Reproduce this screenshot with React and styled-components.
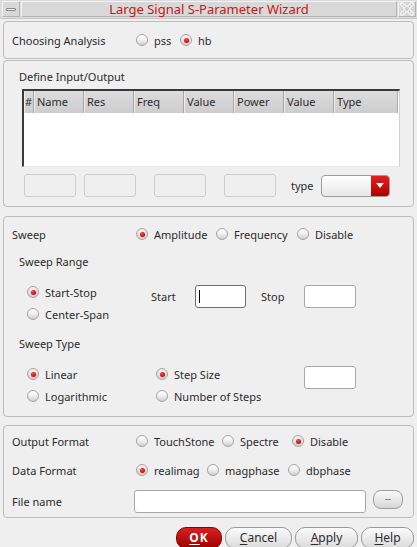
import React from "react";
import styled, { createGlobalStyle, css } from "styled-components";

const Global = createGlobalStyle`
  html, body { margin: 0; padding: 0; background: #efefef; }
  body { font-family: "Noto Sans", "DejaVu Sans", sans-serif; font-size: 11px; color: #2b2b2b; }
  * { box-sizing: border-box; }
`;

const Window = styled.div`
  width: 417px;
  height: 547px;
  overflow: hidden;
  background: #efefef;
  display: flex;
  flex-direction: column;
`;

const TitleBar = styled.div`
  height: 19px;
  flex: none;
  display: flex;
  gap: 1px;
  padding: 1px 1px 1px 2px;
  background: #dcdcdc;
  border-bottom: 1px solid #c8c8c8;
`;

const TitleButton = styled.div`
  width: 18px;
  flex: none;
  display: flex;
  align-items: center;
  justify-content: center;
  border: 1px solid;
  border-color: #f4f4f4 #b4b4b4 #b4b4b4 #f4f4f4;
  background: #d8d8d8;
`;

const Title = styled.div`
  flex: 1;
  display: flex;
  align-items: center;
  justify-content: center;
  border: 1px solid;
  border-color: #f4f4f4 #b4b4b4 #b4b4b4 #f4f4f4;
  background: #d8d8d8;
  color: #cc1414;
  font-size: 13px;
  line-height: 15px;
`;

const MinBar = styled.div`
  width: 10px;
  height: 3px;
  border: 1px solid #8a8a8a;
  background: #f0f0f0;
  border-radius: 1px;
`;

const Panel = styled.div`
  margin: ${(p) => p.$top || 0}px 3px 0 3px;
  height: ${(p) => p.$h}px;
  flex: none;
  border: 1px solid #bdbdbd;
  border-radius: 4px;
  padding: ${(p) => p.$pad || "0 0 0 8px"};
  display: flex;
  flex-direction: column;
  justify-content: ${(p) => (p.$center ? "center" : "flex-start")};
`;

const Row = styled.div`
  display: flex;
  align-items: center;
  height: ${(p) => p.$h || 22}px;
  margin-top: ${(p) => p.$mt || 0}px;
  margin-left: ${(p) => p.$ml || 0}px;
  flex: none;
`;

const Label = styled.div`
  width: ${(p) => p.$w || 124}px;
  flex: none;
  white-space: nowrap;
`;

const SubTitle = styled.div`
  height: 16px;
  line-height: 16px;
  margin-top: ${(p) => p.$mt || 0}px;
  margin-left: ${(p) => p.$ml ?? 7}px;
  white-space: nowrap;
`;

const RadioItem = styled.label`
  display: flex;
  align-items: center;
  gap: 6px;
  width: ${(p) => (p.$w ? `${p.$w}px` : "auto")};
  flex: none;
  white-space: nowrap;
`;

const RadioDot = styled.span`
  width: 12px;
  height: 12px;
  flex: none;
  border-radius: 50%;
  border: 1px solid #a4a4a4;
  background: linear-gradient(#ffffff 0%, #f2f2f2 45%, #cfcfcf 100%);
  display: flex;
  align-items: center;
  justify-content: center;
  ${(p) =>
    p.$on &&
    css`
      background: linear-gradient(#f4f4f4 0%, #e2e2e2 50%, #d0d0d0 100%);
      &::after {
        content: "";
        width: 5px;
        height: 5px;
        border-radius: 50%;
        background: radial-gradient(circle at 40% 35%, #ff4a4a, #d00000 70%);
      }
    `}
`;

const Radio = ({ on, children, w }) => (
  <RadioItem $w={w}>
    <RadioDot $on={on} />
    <span>{children}</span>
  </RadioItem>
);

const TextBox = styled.div`
  width: ${(p) => p.$w}px;
  height: ${(p) => p.$h || 23}px;
  flex: none;
  margin-left: ${(p) => p.$ml || 0}px;
  margin-top: ${(p) => p.$mt || 0}px;
  background: ${(p) => (p.$disabled ? "#efefef" : "#ffffff")};
  border: 1px solid ${(p) => (p.$disabled ? "#cdcdcd" : "#a8a8a8")};
  border-radius: 3px;
  display: flex;
  align-items: center;
  padding-left: 3px;
  ${(p) =>
    p.$focus &&
    css`
      border-color: #6e6e6e;
      &::before {
        content: "";
        width: 1px;
        height: 13px;
        background: #000;
      }
    `}
`;

const Table = styled.div`
  margin: 4px 0 0 3px;
  width: 378px;
  height: 78px;
  flex: none;
  background: #ffffff;
  border-top: 2px solid #3a3a3a;
  border-left: 2px solid #3a3a3a;
  border-right: 1px solid #d0d0d0;
  border-bottom: 1px solid #e8e8e8;
  display: flex;
  flex-direction: column;
`;

const HeaderRow = styled.div`
  height: 22px;
  display: flex;
  background: linear-gradient(#dcdcdc, #cdcdcd);
  margin-right: 1px;
  border-right: 1px solid #a8a8a8;
`;

const HeaderCell = styled.div`
  width: ${(p) => p.$w}px;
  flex: none;
  padding-left: ${(p) => (p.$w < 20 ? 1 : 3)}px;
  line-height: 22px;
  color: #2b2b2b;
  border-right: 1px solid #a6a6a6;
  box-shadow: inset 1px 0 0 #ececec;
  white-space: nowrap;
  overflow: hidden;
  &:last-child { border-right: none; flex: 1; }
`;

const TypeLabel = styled.div`
  margin-left: 15px;
  width: 30px;
  flex: none;
`;

const Select = styled.div`
  width: 69px;
  height: 22px;
  flex: none;
  display: flex;
  border: 1px solid #9c9c9c;
  border-radius: 4px;
  overflow: hidden;
  background: linear-gradient(#ffffff, #e6e6e6);
`;

const SelectField = styled.div`
  flex: 1;
`;

const SelectArrow = styled.div`
  width: 18px;
  flex: none;
  background: linear-gradient(#e02020, #b00000);
  display: flex;
  align-items: center;
  justify-content: center;
  &::after {
    content: "";
    border-left: 4px solid transparent;
    border-right: 4px solid transparent;
    border-top: 5px solid #ffffff;
  }
`;

const Columns = styled.div`
  display: flex;
  margin-top: ${(p) => p.$mt || 0}px;
  margin-left: 15px;
  flex: none;
`;

const Col = styled.div`
  width: ${(p) => p.$w}px;
  flex: none;
  display: flex;
  flex-direction: column;
`;

const FieldLabel = styled.div`
  width: ${(p) => p.$w}px;
  margin-left: ${(p) => p.$ml || 0}px;
  flex: none;
`;

const SmallButton = styled.div`
  width: 30px;
  height: 19px;
  margin-left: 7px;
  margin-top: -3px;
  flex: none;
  border: 1px solid #9c9c9c;
  border-radius: 8px;
  background: linear-gradient(#fafafa, #d6d6d6);
  display: flex;
  align-items: center;
  justify-content: center;
  font-size: 9px;
  color: #444;
  line-height: 1;
  padding-bottom: 2px;
`;

const ButtonBar = styled.div`
  display: flex;
  justify-content: flex-end;
  gap: 3px;
  margin-top: 9px;
  padding-right: 3px;
  flex: none;
`;

const Button = styled.div`
  width: ${(p) => p.$w}px;
  height: 22px;
  flex: none;
  border-radius: 10px;
  border: 1px solid #9a9a9a;
  background: linear-gradient(#fbfbfb, #dadada);
  display: flex;
  align-items: center;
  justify-content: center;
  font-size: 12px;
  color: #2b2b2b;
  padding-bottom: 1px;
  u { text-decoration: underline; text-underline-offset: 2px; }
  ${(p) =>
    p.$primary &&
    css`
      border-color: #8a0000;
      background: linear-gradient(#d82020, #a00000);
      color: #ffffff;
      font-weight: bold;
      letter-spacing: 1px;
    `}
`;

const CloseIcon = () => (
  <svg width="14" height="14" viewBox="0 0 14 14">
    <path
      d="M2 2 L12 12 M12 2 L2 12"
      stroke="#f2f2f2"
      strokeWidth="4"
      strokeLinecap="round"
    />
    <path
      d="M2 2 L12 12 M12 2 L2 12"
      stroke="#c4c4c4"
      strokeWidth="1.5"
      strokeDasharray="1.5 1"
      fill="none"
    />
  </svg>
);

export default function App() {
  const headers = [
    ["#", 10],
    ["Name", 50],
    ["Res", 50],
    ["Freq", 50],
    ["Value", 50],
    ["Power", 50],
    ["Value", 50],
    ["Type", 60],
  ];
  return (
    <>
      <Global />
      <Window>
        <TitleBar>
          <TitleButton>
            <MinBar />
          </TitleButton>
          <Title>Large Signal S-Parameter Wizard</Title>
          <TitleButton>
            <CloseIcon />
          </TitleButton>
        </TitleBar>

        <Panel $top={2} $h={38} $center>
          <Row>
            <Label>Choosing Analysis</Label>
            <Radio w={44}>pss</Radio>
            <Radio on>hb</Radio>
          </Row>
        </Panel>

        <Panel $top={1} $h={147} $pad="8px 0 0 15px">
          <SubTitle $ml={0}>Define Input/Output</SubTitle>
          <Table>
            <HeaderRow>
              {headers.map(([t, w], i) => (
                <HeaderCell key={i} $w={w}>
                  {t}
                </HeaderCell>
              ))}
            </HeaderRow>
          </Table>
          <Row $h={23} $mt={7} $ml={5}>
            <TextBox $w={52} $disabled />
            <TextBox $w={52} $ml={8} $disabled />
            <TextBox $w={52} $ml={18} $disabled />
            <TextBox $w={52} $ml={18} $disabled />
            <TypeLabel>type</TypeLabel>
            <Select>
              <SelectField />
              <SelectArrow />
            </Select>
          </Row>
        </Panel>

        <Panel $top={9} $h={201} $pad="6px 0 0 8px">
          <Row>
            <Label>Sweep</Label>
            <Radio on w={80}>Amplitude</Radio>
            <Radio w={81}>Frequency</Radio>
            <Radio>Disable</Radio>
          </Row>
          <SubTitle $mt={9}>Sweep Range</SubTitle>
          <Columns $mt={11}>
            <Col $w={124}>
              <Row>
                <Radio on>Start-Stop</Radio>
              </Row>
              <Row>
                <Radio>Center-Span</Radio>
              </Row>
            </Col>
            <Row $h={23} $mt={4}>
              <FieldLabel $w={44}>Start</FieldLabel>
              <TextBox $w={51} $focus />
              <FieldLabel $w={43} $ml={15}>
                Stop
              </FieldLabel>
              <TextBox $w={52} />
            </Row>
          </Columns>
          <SubTitle $mt={11}>Sweep Type</SubTitle>
          <Columns $mt={11}>
            <Col $w={129}>
              <Row>
                <Radio on>Linear</Radio>
              </Row>
              <Row>
                <Radio>Logarithmic</Radio>
              </Row>
            </Col>
            <Col $w={148}>
              <Row>
                <Radio on>Step Size</Radio>
              </Row>
              <Row>
                <Radio>Number of Steps</Radio>
              </Row>
            </Col>
            <TextBox $w={52} $mt={3} />
          </Columns>
        </Panel>

        <Panel $top={8} $h={93} $pad="4px 0 0 8px">
          <Row>
            <Label>Output Format</Label>
            <Radio w={86}>TouchStone</Radio>
            <Radio w={70}>Spectre</Radio>
            <Radio on>Disable</Radio>
          </Row>
          <Row $mt={7}>
            <Label>Data Format</Label>
            <Radio on w={71}>realimag</Radio>
            <Radio w={81}>magphase</Radio>
            <Radio>dbphase</Radio>
          </Row>
          <Row $mt={9}>
            <Label $w={122}>File name</Label>
            <TextBox $w={232} />
            <SmallButton>--</SmallButton>
          </Row>
        </Panel>

        <ButtonBar>
          <Button $w={46} $primary>
            <span>
              <u>O</u>K
            </span>
          </Button>
          <Button $w={67}>
            <span>
              <u>C</u>ancel
            </span>
          </Button>
          <Button $w={63}>
            <span>
              <u>A</u>pply
            </span>
          </Button>
          <Button $w={53}>
            <span>
              <u>H</u>elp
            </span>
          </Button>
        </ButtonBar>
      </Window>
    </>
  );
}
